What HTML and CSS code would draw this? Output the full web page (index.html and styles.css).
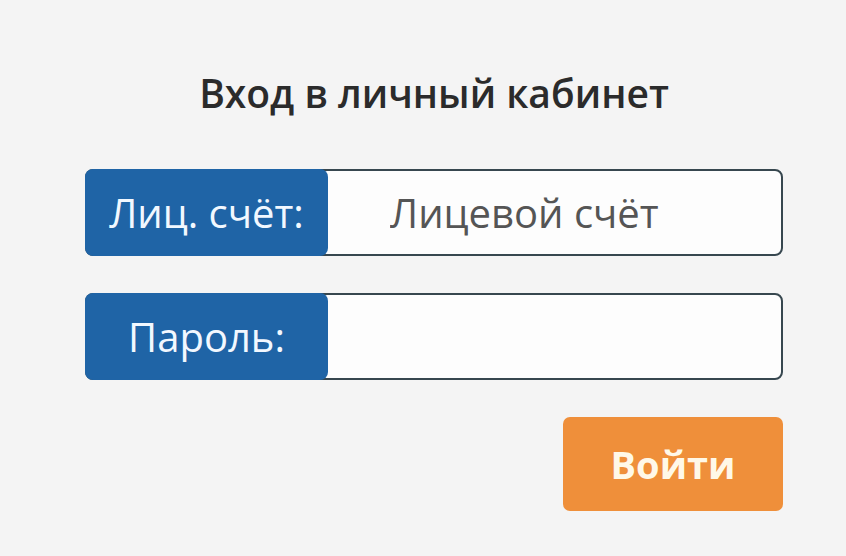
FILE: index.html
```html
<!DOCTYPE html>
<html lang="ru">
<head>
    <meta charset="UTF-8">
    <title>Вход в личный кабинет</title>
    <link rel="stylesheet" href="styles.css">
</head>
<body>
    <form class="login" onsubmit="return false;">
        <h1>Вход в личный кабинет</h1>

        <div class="field">
            <label for="account">Лиц. счёт:</label>
            <input type="text" id="account" placeholder="Лицевой счёт">
        </div>

        <div class="field">
            <label for="password">Пароль:</label>
            <input type="password" id="password">
        </div>

        <div class="actions">
            <button type="submit">Войти</button>
        </div>
    </form>
</body>
</html>
```

FILE: styles.css
```css
body {
    font-family: "Open Sans", "Noto Sans", sans-serif;
    background-color: #f4f4f4;
    margin: 0;
    padding: 0;
}

.login {
    width: 698px;
    margin: 0 0 0 85px;
    padding-top: 66px;
    display: flex;
    flex-direction: column;
}

h1 {
    margin: 0 0 50px;
    text-align: center;
    font-size: 39px;
    font-weight: 600;
    color: #2b2b2b;
}

.field {
    display: flex;
    height: 83px;
    margin-bottom: 37px;
    border: 2px solid #37474f;
    border-radius: 8px;
    background-color: #fdfdfd;
}

.field label {
    flex: none;
    width: 243px;
    margin: -2px 0 -2px -2px;
    display: flex;
    align-items: center;
    justify-content: center;
    background-color: #1f64a6;
    color: #f2f8ff;
    border-radius: 8px;
    font-size: 40px;
    white-space: nowrap;
}

.field input {
    flex: 1;
    min-width: 0;
    border: none;
    background: transparent;
    padding: 0 0 0 62px;
    font-family: inherit;
    font-size: 40px;
    color: #333;
    outline: none;
}

.field input::placeholder {
    color: #555;
}

.actions {
    display: flex;
    justify-content: flex-end;
}

button {
    width: 220px;
    height: 94px;
    border: none;
    border-radius: 7px;
    background-color: #ef8f3a;
    color: #fff8e8;
    font-family: inherit;
    font-size: 38px;
    font-weight: 700;
    cursor: pointer;
}
```
